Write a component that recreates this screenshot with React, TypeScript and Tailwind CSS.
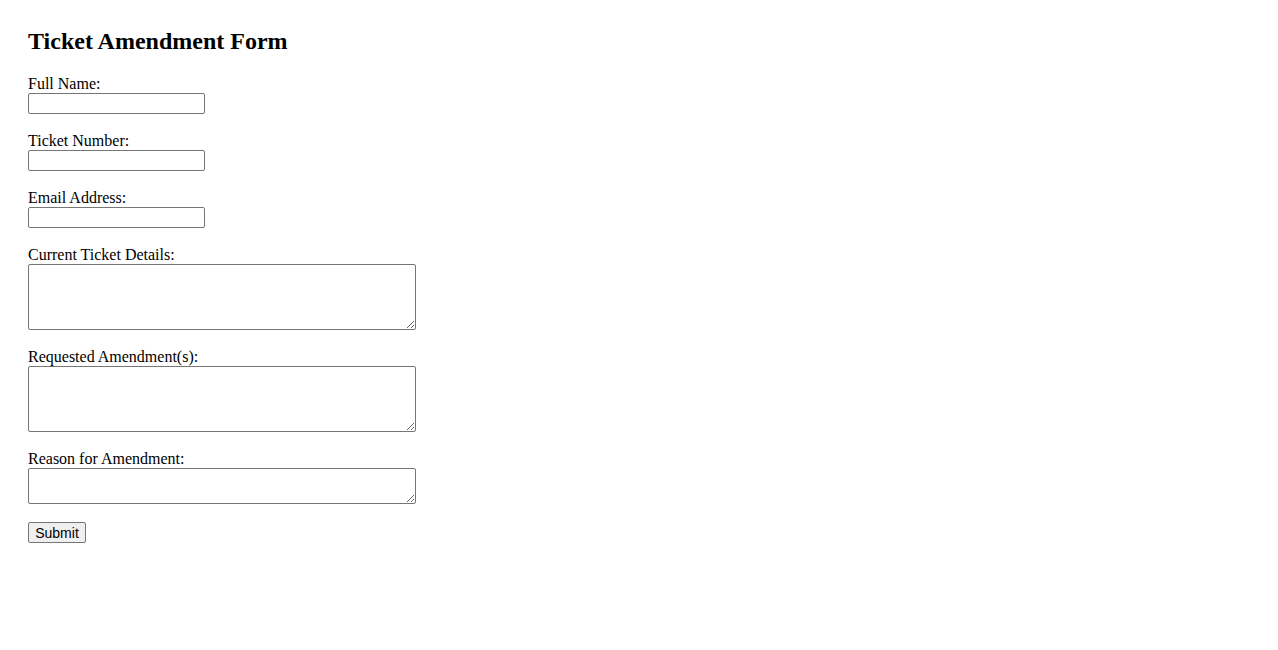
export default function App() {
  const inputCls =
    "block w-[177px] h-[21px] border border-[#767676] rounded-[2px] px-[2px] bg-white text-[13.33px] [font-family:'Liberation_Sans',Arial,sans-serif]";
  const areaCls =
    "block w-[388px] border border-[#767676] rounded-[2px] p-[2px] bg-white text-[13.33px] leading-[15px] resize [font-family:'Liberation_Mono',monospace]";
  const labelCls = "block h-[18px] leading-[18px] text-[16px]";
  return (
    <div className="min-h-[650px] bg-white text-black pt-[28px] pl-[28px] [font-family:'Liberation_Serif','Times_New_Roman',serif]">
      <h2 className="text-[24px] font-bold leading-[27px] mb-[20px]">Ticket Amendment Form</h2>
      <form className="flex flex-col items-start" onSubmit={(e) => e.preventDefault()}>
        <div className="mb-[18px]">
          <label className={labelCls} htmlFor="fullName">Full Name:</label>
          <input id="fullName" type="text" className={inputCls} />
        </div>
        <div className="mb-[18px]">
          <label className={labelCls} htmlFor="ticketNumber">Ticket Number:</label>
          <input id="ticketNumber" type="text" className={inputCls} />
        </div>
        <div className="mb-[18px]">
          <label className={labelCls} htmlFor="email">Email Address:</label>
          <input id="email" type="email" className={inputCls} />
        </div>
        <div className="mb-[18px]">
          <label className={labelCls} htmlFor="current">Current Ticket Details:</label>
          <textarea id="current" className={areaCls + " h-[66px]"} />
        </div>
        <div className="mb-[18px]">
          <label className={labelCls} htmlFor="requested">Requested Amendment(s):</label>
          <textarea id="requested" className={areaCls + " h-[66px]"} />
        </div>
        <div className="mb-[18px]">
          <label className={labelCls} htmlFor="reason">Reason for Amendment:</label>
          <textarea id="reason" className={areaCls + " h-[36px]"} />
        </div>
        <button
          type="submit"
          className="w-[58px] h-[21px] border border-[#767676] bg-[#efefef] rounded-[2px] text-[14px] leading-[16px] text-black text-center [font-family:'Liberation_Sans',Arial,sans-serif]"
        >
          Submit
        </button>
      </form>
    </div>
  );
}
